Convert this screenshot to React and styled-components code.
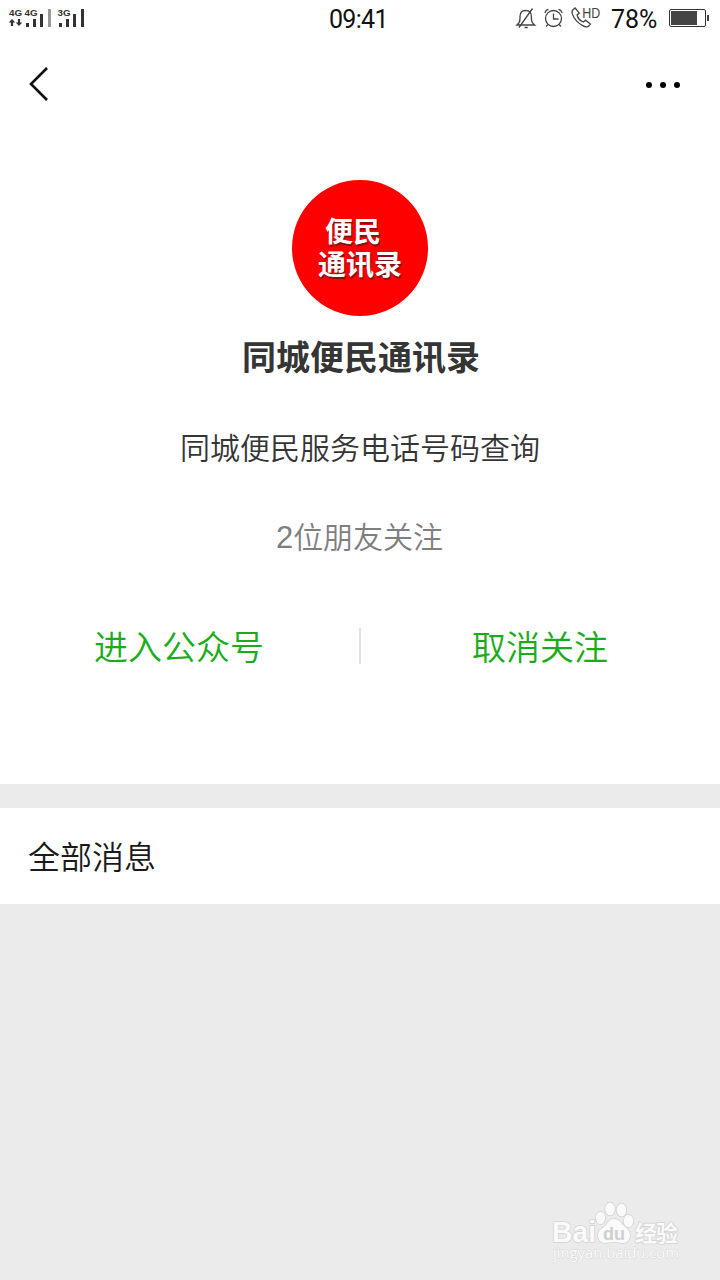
import React from "react";
import styled, { createGlobalStyle } from "styled-components";

const GlobalStyle = createGlobalStyle`
    * {
        box-sizing: border-box;
    }
    body {
        margin: 0;
        background-color: #ebebeb;
        font-family: "Noto Sans CJK SC", sans-serif;
    }
`;

const Page = styled.div`
    position: relative;
    display: flex;
    flex-direction: column;
    width: 720px;
    height: 1280px;
    overflow: hidden;
    background-color: #ebebeb;
`;

const StatusBar = styled.header`
    display: grid;
    grid-template-columns: 1fr auto 1fr;
    height: 38px;
    background-color: white;
    color: #111;
    font-family: Roboto, sans-serif;
    line-height: 39px;
    svg {
        display: block;
    }
`;

const Clock = styled.time`
    width: 64px;
    padding-left: 1px;
    white-space: nowrap;
    font-size: 25px;
    letter-spacing: -0.7px;
`;

const StatusIcons = styled.div`
    display: flex;
    justify-content: flex-end;
`;

const BatteryLevel = styled.span`
    width: 51px;
    margin-left: 9px;
    font-size: 25px;
`;

const NavBar = styled.nav`
    display: flex;
    justify-content: space-between;
    height: 92px;
    background-color: white;
`;

const NavButton = styled.button`
    width: 100px;
    height: 92px;
    padding: 0;
    border: 0;
    background: transparent;
    svg {
        display: block;
    }
`;

const Profile = styled.section`
    display: flex;
    flex-direction: column;
    align-items: center;
    height: 654px;
    padding-top: 50px;
    background-color: white;
`;

const Avatar = styled.div`
    display: flex;
    flex-direction: column;
    align-items: center;
    width: 136px;
    height: 136px;
    padding-top: 34px;
    border-radius: 50%;
    background-color: #fe0000;
    color: white;
    font-size: 28px;
    font-weight: 700;
    line-height: 33px;
    text-shadow: 1px 2px 1px #7b1414;
`;

const AvatarLine = styled.span`
    margin-left: ${props => props.$shift || 0}px;
`;

const Name = styled.h1`
    margin: 15px 0 0;
    padding-left: 2px;
    color: #353535;
    font-size: 34px;
    font-weight: 700;
    line-height: 50px;
`;

const Description = styled.p`
    margin: 43px 0 0;
    color: #353535;
    font-size: 30px;
    font-weight: 350;
    line-height: 44px;
`;

const Followers = styled.p`
    margin: 45px 0 0;
    padding-right: 1px;
    color: #7f7f7f;
    font-size: 30px;
    font-weight: 350;
    line-height: 44px;
    span {
        font-family: "Liberation Sans", sans-serif;
        font-size: 31px;
    }
`;

const Actions = styled.div`
    display: flex;
    align-items: center;
    width: 100%;
    margin-top: 61px;
`;

const Action = styled.button`
    flex: 1;
    height: 50px;
    padding: 0 1px 0 0;
    border: 0;
    background: transparent;
    color: #1aad19;
    font-family: inherit;
    font-size: 34px;
    font-weight: 350;
    line-height: 50px;
`;

const Divider = styled.span`
    width: 2px;
    height: 36px;
    background-color: #e0e0e0;
`;

const Messages = styled.section`
    height: 96px;
    margin-top: 24px;
    padding-left: 28px;
    background-color: white;
`;

const SectionTitle = styled.h2`
    margin: 0;
    color: #1a1a1a;
    font-size: 32px;
    font-weight: 350;
    line-height: 94px;
`;

const Watermark = styled.div`
    position: absolute;
    left: 540px;
    top: 1190px;
    svg {
        display: block;
    }
`;

const SignalIcon = () => (
    <svg width="100" height="38" viewBox="0 0 100 38" fill="#333">
        <g fontFamily="Liberation Sans, sans-serif" fontSize="9.8" fontWeight="700">
            <text x="9" y="16.3">4G</text>
            <text x="24.5" y="16.3">4G</text>
            <text x="57.5" y="16.3">3G</text>
        </g>
        <path d="M12 19l3.3 3.500h-2.200V26h-2.200v-3.500H8.700zM19 26l-3.300-3.500h2.200V19h2.200v3.500h2.200z" />
        <path d="M26 23h3v4h-3zM33 19h3v8h-3zM40 14h3v13h-3z" />
        <path fill="#999" d="M48 9h3v18h-3z" />
        <path d="M59 23h3v4h-3zM66 19h3v8h-3zM73 14h3v13h-3zM81 9h3v18h-3z" />
    </svg>
);

// silent mode, alarm and HD call
const ModeIcons = () => (
    <svg width="88" height="38" viewBox="514 0 88 38" fill="none" stroke="#444" strokeWidth="1.3">
        <path d="M517 25c2.200-1.700 3-3.400 3-6.500v-2c0-3.500 2-6 5.700-6s5.700 2.500 5.700 6v2c0 3.100.8 4.800 3.200 6.500z" />
        <path d="M532.5 8.500L519 27.500M524.500 27.500h3.200" />
        <circle cx="553.5" cy="18.5" r="8" />
        <path d="M553.5 13.500v5.500h5M545 13c.3-2.100 1.500-3.300 3.500-3.700M562 13c-.3-2.100-1.500-3.300-3.500-3.700M548 24.500l-2 2M559 24.500l2 2" />
        <path d="M573.2 9.600l1.900-1.600 4.200 5.100-2.200 1.900c.7 3.100 3.200 6 6.200 7l2.300-1.800 4.800 3.800-1.900 2.200c-1.500 1.200-4 .6-6.300-.8-4.500-2.600-8.400-7.200-9.900-11.500-.6-1.900-.4-3.200.9-4.300z" />
        <text x="582.3" y="17.6" fill="#444" stroke="none" fontFamily="Liberation Sans, sans-serif" fontSize="14" textLength="18" lengthAdjust="spacingAndGlyphs">HD</text>
    </svg>
);

const BatteryIcon = () => (
    <svg width="58" height="38" viewBox="662 0 58 38">
        <rect x="669.5" y="9.5" width="36" height="17" rx="1.5" fill="none" stroke="#333" />
        <path fill="#444" d="M671 11h26v14h-26zM707 15h2v6h-2z" />
    </svg>
);

const BackIcon = () => (
    <svg width="100" height="92" viewBox="0 38 100 92">
        <path d="M47 68L31 84l16 16" fill="none" stroke="#111" strokeWidth="2.6" />
    </svg>
);

const MoreIcon = () => (
    <svg width="100" height="92" viewBox="620 38 100 92">
        <circle cx="649" cy="85" r="3" />
        <circle cx="663" cy="85" r="3" />
        <circle cx="677" cy="85" r="3" />
    </svg>
);

const BaiduLogo = () => (
    <svg width="160" height="80" viewBox="0 0 160 80">
        <g fill="#fafafa" stroke="#d3d3d3" strokeWidth="1.6" paintOrder="stroke" strokeLinejoin="round">
            <text x="12" y="52" fontFamily="Liberation Sans, sans-serif" fontSize="29" fontWeight="700" textLength="44" lengthAdjust="spacingAndGlyphs">Bai</text>
            <ellipse cx="60.5" cy="28" rx="4.7" ry="6.2" />
            <ellipse cx="70" cy="19" rx="4.8" ry="6.5" />
            <ellipse cx="81.5" cy="20" rx="4.8" ry="6.5" />
            <ellipse cx="88.5" cy="31" rx="4.7" ry="6.2" />
            <path d="M74 29c5 0 7 4 10 7s6 5 6 9c0 5-3 8-7 8-3 0-6-1-9-1s-6 1-9 1c-4 0-7-3-7-8s4-6 7-9 4-7 9-7z" />
            <text x="95" y="50.5" fontFamily="Noto Sans CJK SC, sans-serif" fontSize="22" fontWeight="700" textLength="43">经验</text>
            <text x="13" y="68" strokeWidth="0.8" fontFamily="Open Sans, sans-serif" fontSize="15" fontWeight="500" textLength="126" lengthAdjust="spacingAndGlyphs">jingyan.baidu.com</text>
        </g>
        <text x="63" y="50" fill="#cfcfcf" fontFamily="Liberation Sans, sans-serif" fontSize="19" fontWeight="700" textLength="22" lengthAdjust="spacingAndGlyphs">du</text>
    </svg>
);

const App = () => {
    return (
        <Page>
            <GlobalStyle />
            <StatusBar>
                <SignalIcon />
                <Clock>09:41</Clock>
                <StatusIcons>
                    <ModeIcons />
                    <BatteryLevel>78%</BatteryLevel>
                    <BatteryIcon />
                </StatusIcons>
            </StatusBar>

            <NavBar>
                <NavButton type="button" aria-label="返回">
                    <BackIcon />
                </NavButton>
                <NavButton type="button" aria-label="更多">
                    <MoreIcon />
                </NavButton>
            </NavBar>

            <Profile>
                <Avatar>
                    <AvatarLine $shift={-14}>便民</AvatarLine>
                    <AvatarLine>通讯录</AvatarLine>
                </Avatar>
                <Name>同城便民通讯录</Name>
                <Description>同城便民服务电话号码查询</Description>
                <Followers>
                    <span>2</span>位朋友关注
                </Followers>
                <Actions>
                    <Action type="button">进入公众号</Action>
                    <Divider />
                    <Action type="button">取消关注</Action>
                </Actions>
            </Profile>

            <Messages>
                <SectionTitle>全部消息</SectionTitle>
            </Messages>

            <Watermark>
                <BaiduLogo />
            </Watermark>
        </Page>
    );
};

export default App;
